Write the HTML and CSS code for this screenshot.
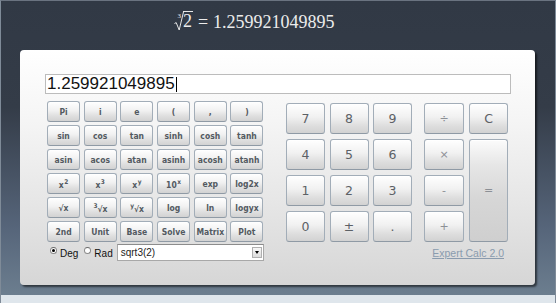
FILE: index.html
```html
<!DOCTYPE html>
<html>
<head>
<meta charset="utf-8">
<link rel="stylesheet" href="styles.css">
</head>
<body>
<div class="frame">
  <div class="title">
    <span class="root"><span class="idx">3</span><svg class="surd" width="10" height="20" viewBox="0 0 10 20"><path d="M0.5 12.5 L2.2 11.6 L5.2 19 L9.6 0.5" fill="none" stroke="#e8e8e8" stroke-width="1"/></svg><span class="arg">2</span></span><span class="eq">=</span><span>1.259921049895</span>
  </div>
  <div class="panel">
    <div class="display">1.259921049895<span class="caret"></span></div>
    <div class="keys">
      <div class="left">
        <div class="fgrid">
          <div class="btn fn">Pi</div>
          <div class="btn fn">i</div>
          <div class="btn fn">e</div>
          <div class="btn fn">(</div>
          <div class="btn fn">,</div>
          <div class="btn fn">)</div>
          <div class="btn fn">sin</div>
          <div class="btn fn">cos</div>
          <div class="btn fn">tan</div>
          <div class="btn fn">sinh</div>
          <div class="btn fn">cosh</div>
          <div class="btn fn">tanh</div>
          <div class="btn fn">asin</div>
          <div class="btn fn">acos</div>
          <div class="btn fn">atan</div>
          <div class="btn fn">asinh</div>
          <div class="btn fn">acosh</div>
          <div class="btn fn">atanh</div>
          <div class="btn fn"><span class="lbl">x<sup>2</sup></span></div>
          <div class="btn fn"><span class="lbl">x<sup>3</sup></span></div>
          <div class="btn fn"><span class="lbl">x<sup>y</sup></span></div>
          <div class="btn fn"><span class="lbl">10<sup>x</sup></span></div>
          <div class="btn fn">exp</div>
          <div class="btn fn">log2x</div>
          <div class="btn fn">√x</div>
          <div class="btn fn"><span class="lbl"><sup>3</sup>√x</span></div>
          <div class="btn fn"><span class="lbl"><sup>y</sup>√x</span></div>
          <div class="btn fn">log</div>
          <div class="btn fn">ln</div>
          <div class="btn fn">logyx</div>
          <div class="btn fn">2nd</div>
          <div class="btn fn">Unit</div>
          <div class="btn fn">Base</div>
          <div class="btn fn">Solve</div>
          <div class="btn fn">Matrix</div>
          <div class="btn fn">Plot</div>
        </div>
        <div class="opts">
          <span class="radio"><span class="dot on"></span><span class="rlabel">Deg</span></span>
          <span class="radio"><span class="dot"></span><span class="rlabel">Rad</span></span>
          <div class="select"><span class="seltext">sqrt3(2)</span><span class="arrow"><span class="tri"></span></span></div>
        </div>
      </div>
      <div class="right">
        <div class="pads">
          <div class="ngrid">
            <div class="btn num">7</div>
            <div class="btn num">8</div>
            <div class="btn num">9</div>
            <div class="btn num">4</div>
            <div class="btn num">5</div>
            <div class="btn num">6</div>
            <div class="btn num">1</div>
            <div class="btn num">2</div>
            <div class="btn num">3</div>
            <div class="btn num">0</div>
            <div class="btn num">±</div>
            <div class="btn num">.</div>
          </div>
          <div class="ogrid">
            <div class="btn op">÷</div>
            <div class="btn num">C</div>
            <div class="btn op">×</div>
            <div class="btn op equals">=</div>
            <div class="btn op">-</div>
            <div class="btn op">+</div>
          </div>
        </div>
        <div class="linkrow"><a class="link" href="#">Expert Calc 2.0</a></div>
      </div>
    </div>
  </div>
</div>
</body>
</html>
```

FILE: styles.css
```css
html, body {
  margin: 0;
  padding: 0;
}
.frame {
  width: 556px;
  height: 303px;
  box-sizing: border-box;
  border-left: 1px solid #7f8b98;
  border-right: 1px solid #7f8b98;
  border-top: 1px solid #6a7380;
  background: linear-gradient(to bottom, #313945 0%, #343c48 35%, #56657a 75%, #6c7e8f 97.5%, #dfe6ec 97.5%);
  display: flex;
  flex-direction: column;
}
.title {
  height: 49px;
  display: flex;
  justify-content: center;
  align-items: center;
  padding-right: 44px;
  padding-bottom: 6px;
  box-sizing: border-box;
  font-family: "Liberation Serif", "DejaVu Serif", serif;
  font-size: 18px;
  color: #ececec;
}
.root {
  display: inline-flex;
  align-items: flex-start;
  margin-top: -3px;
}
.idx {
  font-size: 7px;
  line-height: 7px;
  margin-right: -7px;
  margin-top: 2px;
}
.surd {
  display: block;
}
.arg {
  border-top: 1px solid #e8e8e8;
  line-height: 19px;
  padding: 0 1px 0 0;
  margin-left: -1px;
}
.eq {
  margin: 0 5px 0 5px;
}
.panel {
  margin-left: 19px;
  width: 515px;
  height: 235px;
  box-sizing: border-box;
  border-radius: 4px;
  background: linear-gradient(to bottom, #ffffff 0%, #f5f5f5 30%, #e4e4e4 70%, #d6d6d6 100%);
  box-shadow: 2px 2px 2px rgba(0, 0, 0, 0.55);
  padding: 24px 0 0 25px;
}
.display {
  width: 466px;
  height: 20px;
  box-sizing: border-box;
  border: 1px solid #bcbcbc;
  background: #fff;
  font-family: "Liberation Sans", Arial, sans-serif;
  font-size: 17px;
  line-height: 18px;
  padding-left: 1px;
  color: #111;
  display: flex;
  align-items: center;
}
.caret {
  display: inline-block;
  width: 1px;
  height: 15px;
  background: #000;
  margin-left: 1px;
}
.keys {
  display: flex;
  margin-top: 7px;
}
.left {
  width: 217px;
  margin-left: 2px;
}
.fgrid {
  display: grid;
  grid-template-columns: repeat(6, 33px);
  column-gap: 3.7px;
  grid-auto-rows: 21px;
  row-gap: 3px;
}
.btn {
  box-sizing: border-box;
  border: 1px solid #a2adb8;
  border-bottom-color: #8f9aa5;
  border-radius: 3px;
  background: linear-gradient(to bottom, #ffffff 0%, #f1f1f1 45%, #dedede 75%, #d2d2d2 100%);
  box-shadow: inset 0 1px 0 #ffffff;
  display: flex;
  align-items: center;
  justify-content: center;
  color: #535a61;
}
.fn {
  font-family: "DejaVu Sans Condensed", "DejaVu Sans", sans-serif;
  font-weight: bold;
  font-size: 8.5px;
}
.lbl {
  line-height: 10px;
  padding-top: 2px;
}
.fn sup {
  font-size: 6.5px;
  line-height: 0;
  vertical-align: 4px;
  margin-left: 0.5px;
}
.opts {
  display: flex;
  align-items: center;
  margin-top: 2px;
  height: 17px;
  font-family: "Liberation Sans", Arial, sans-serif;
  font-size: 10px;
  color: #111;
}
.radio {
  display: flex;
  align-items: center;
  margin-left: 3px;
}
.radio + .radio {
  margin-left: 6px;
}
.dot {
  width: 7px;
  height: 7px;
  box-sizing: border-box;
  border: 1px solid #8a8a8a;
  border-top-color: #6a6a6a;
  border-radius: 50%;
  background: #fff;
  margin-right: 3px;
  margin-top: -5px;
  display: flex;
  align-items: center;
  justify-content: center;
}
.dot.on::after {
  content: "";
  width: 3px;
  height: 3px;
  border-radius: 50%;
  background: #000;
}
.rlabel {
  margin-top: 2px;
}
.select {
  margin-left: 4px;
  width: 147px;
  height: 17px;
  box-sizing: border-box;
  border: 1px solid #a8a8a8;
  border-top-color: #8c8c8c;
  background: #fff;
  display: flex;
  align-items: center;
  justify-content: space-between;
  padding: 0 1px 0 3px;
}
.seltext {
  font-size: 10px;
  color: #222;
}
.arrow {
  width: 10px;
  height: 11px;
  box-sizing: border-box;
  border: 1px solid #b0b0b0;
  background: linear-gradient(#f8f8f8, #dcdcdc);
  display: flex;
  align-items: center;
  justify-content: center;
}
.tri {
  width: 0;
  height: 0;
  border-left: 2px solid transparent;
  border-right: 2px solid transparent;
  border-top: 3px solid #000;
}
.right {
  margin-left: 22px;
  margin-top: 2px;
}
.pads {
  display: flex;
}
.ngrid {
  display: grid;
  grid-template-columns: repeat(3, 39px);
  column-gap: 4.5px;
  grid-auto-rows: 31px;
  row-gap: 5px;
}
.ogrid {
  margin-left: 12px;
  display: grid;
  grid-template-columns: 40px 39px;
  column-gap: 5px;
  grid-auto-rows: 31px;
  row-gap: 5px;
}
.equals {
  grid-column: 2;
  grid-row: 2 / span 3;
  background: linear-gradient(to bottom, #fbfbfb 0%, #e6e6e6 25%, #d6d6d6 60%, #cfcfcf 100%);
}
.num {
  font-family: "DejaVu Sans", sans-serif;
  font-size: 12.5px;
  color: #5c6166;
}
.op {
  font-family: "DejaVu Sans", sans-serif;
  font-size: 11px;
  color: #8c9096;
}
.linkrow {
  display: flex;
  justify-content: flex-end;
  padding-right: 4px;
  margin-top: 5px;
}
.link {
  font-family: "Liberation Sans", Arial, sans-serif;
  font-size: 10.5px;
  color: #8a9bae;
  text-decoration: underline;
}
```
